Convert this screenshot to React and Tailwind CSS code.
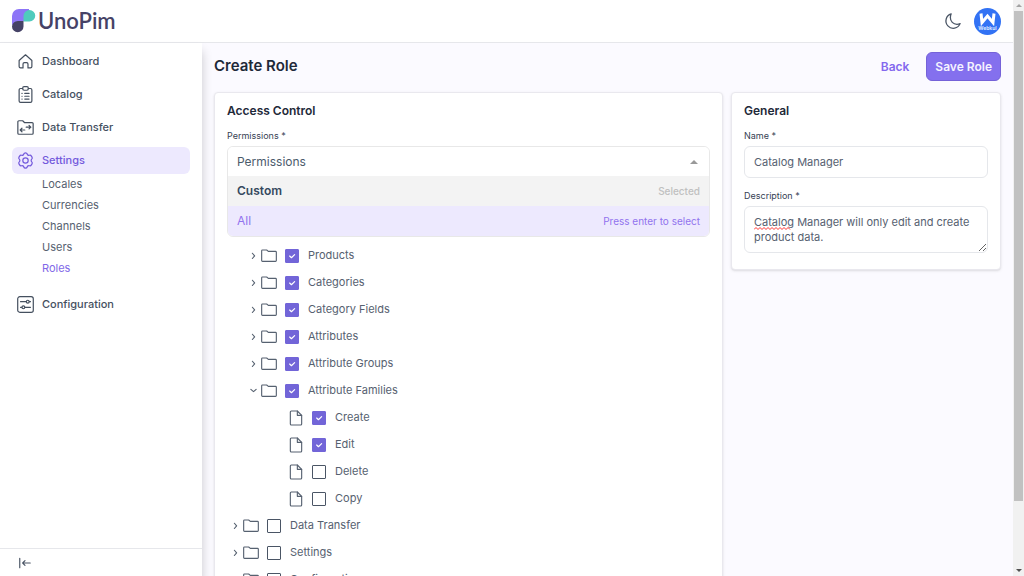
import React, { useState } from "react";

const navItems = [
  { label: "Dashboard", icon: HomeIcon },
  { label: "Catalog", icon: ClipboardIcon },
  { label: "Data Transfer", icon: TransferIcon },
  {
    label: "Settings",
    icon: GearIcon,
    active: true,
    children: ["Locales", "Currencies", "Channels", "Users", "Roles"],
  },
  { label: "Configuration", icon: SlidersIcon },
];

const catalogTree = [
  { key: "products", label: "Products" },
  { key: "categories", label: "Categories" },
  { key: "category_fields", label: "Category Fields" },
  { key: "attributes", label: "Attributes" },
  { key: "attribute_groups", label: "Attribute Groups" },
  {
    key: "families",
    label: "Attribute Families",
    children: [
      { key: "families.create", label: "Create" },
      { key: "families.edit", label: "Edit" },
      { key: "families.delete", label: "Delete" },
      { key: "families.copy", label: "Copy" },
    ],
  },
];

const rootTree = [
  { key: "data_transfer", label: "Data Transfer" },
  { key: "settings", label: "Settings" },
  { key: "configuration", label: "Configuration" },
];

function Svg({ className, children, strokeWidth = 1.7 }) {
  return (
    <svg
      viewBox="0 0 24 24"
      fill="none"
      stroke="currentColor"
      strokeWidth={strokeWidth}
      strokeLinecap="round"
      strokeLinejoin="round"
      className={className}
      aria-hidden="true"
    >
      {children}
    </svg>
  );
}

function HomeIcon(props) {
  return (
    <Svg {...props}>
      <path d="M3 10.500 12 2.500l9 8V19a2 2 0 0 1-2 2H15.500v-5.500a2 2 0 0 0-2-2h-3a2 2 0 0 0-2 2V21H5a2 2 0 0 1-2-2Z" />
    </Svg>
  );
}

function ClipboardIcon(props) {
  return (
    <Svg {...props}>
      <path d="M8 3.500H5a2 2 0 0 0-2 2V21a2 2 0 0 0 2 2h14a2 2 0 0 0 2-2V5.500a2 2 0 0 0-2-2H16" />
      <rect x="8" y="1" width="8" height="5" rx="2" />
      <path d="M7 10.500h.2M11 10.500h6M7 14.500h.2M11 14.500h6M7 18.500h.2M11 18.500h6" />
    </Svg>
  );
}

function TransferIcon(props) {
  return (
    <Svg {...props}>
      <path d="M1.200 4A1.500 1.500 0 0 1 2.700 2.500H8L10.500 5H21.300a1.500 1.500 0 0 1 1.500 1.500V20a1.500 1.500 0 0 1-1.500 1.500H2.700A1.500 1.500 0 0 1 1.200 20Z" />
      <path d="M13 11.500h6.500M17 9l2.500 2.500L17 14M11 15.500H4.500M7 13l-2.500 2.500L7 18" />
    </Svg>
  );
}

function GearIcon(props) {
  return (
    <Svg {...props}>
      <path d="M9.600 2.800c.3-1.100 1-1.600 2.400-1.600s2.100.5 2.400 1.600c.4 1.500 1.800 2.200 3.200 1.800 1.200-.4 2 0 2.700 1.200l.9 1.500c.7 1.200.5 2-.4 2.800-1.100 1-1.100 2.800 0 3.800.9.800 1.100 1.600.4 2.800l-.9 1.500c-.7 1.200-1.500 1.600-2.700 1.200-1.400-.4-2.800.3-3.200 1.800-.3 1.100-1 1.600-2.400 1.600s-2.100-.5-2.400-1.600c-.4-1.500-1.800-2.200-3.200-1.800-1.200.4-2 0-2.700-1.200l-.9-1.500c-.7-1.200-.5-2 .4-2.800 1.100-1 1.100-2.800 0-3.800-.9-.8-1.100-1.600-.4-2.800l.9-1.500c.7-1.200 1.500-1.600 2.700-1.200 1.400.4 2.800-.3 3.200-1.800Z" />
      <circle cx="12" cy="12" r="3.800" />
    </Svg>
  );
}

function SlidersIcon(props) {
  return (
    <Svg {...props}>
      <rect x="1" y="1" width="22" height="22" rx="3" />
      <path d="M5 8h8M17.500 8H19M5 16h1.500M11.500 16H19" />
      <circle cx="15.200" cy="8" r="2" />
      <circle cx="9" cy="16" r="2" />
    </Svg>
  );
}

function FolderIcon() {
  return (
    <Svg className="size-4 shrink-0">
      <path d="M1 4.200A1.200 1.200 0 0 1 2.200 3H8.500L11 5H21.800A1.200 1.200 0 0 1 23 6.200v12.600a1.200 1.200 0 0 1-1.200 1.200H2.200A1.200 1.200 0 0 1 1 18.800Z" />
    </Svg>
  );
}

function FileIcon() {
  return (
    <Svg className="size-4 shrink-0">
      <path d="M14 1.500H5A1.500 1.500 0 0 0 3.500 3v18A1.500 1.500 0 0 0 5 22.500h14a1.500 1.500 0 0 0 1.500-1.500V8Z" />
      <path d="M14 1.500V8h6.500" />
    </Svg>
  );
}

function Logo() {
  return (
    <a href="#" className="flex items-center gap-[2px]">
      <svg viewBox="0 0 24 24" className="size-6" aria-hidden="true">
        <path d="M7 0h10v12H6l-6 4V7a7 7 0 0 1 7-7Z" fill="#8d75f7" />
        <path d="M17.500 1a5.700 5.700 0 0 1 0 11.500H11.500V7a6 6 0 0 1 6-6Z" fill="#4fcbbd" />
        <path d="M6 12h5.500v5.500a5.750 5.750 0 0 1-11.500 0A5.700 5.700 0 0 1 6 12Z" fill="#454266" />
      </svg>
      <span className="font-[Lato] text-[22px] leading-6 font-semibold text-[#454266]">UnoPim</span>
    </a>
  );
}

function Header() {
  return (
    <header className="flex h-[43px] items-center justify-between border-b border-[#e6e7eb] bg-white px-3">
      <Logo />
      <div className="flex items-center gap-3">
        <button type="button" aria-label="Toggle dark mode" className="cursor-pointer text-[#4a5565]">
          <Svg className="size-[18px]">
            <path d="M9.500 2.500a9.800 9.800 0 1 0 12 13c-1.400.6-2.700.9-4.200.9A8.700 8.700 0 0 1 8.500 7.500c0-1.800.3-3.500 1-5Z" />
          </Svg>
        </button>
        <button type="button" aria-label="Account" className="cursor-pointer">
          <svg viewBox="0 0 27 27" className="block size-[27px]">
            <circle cx="13.500" cy="13.500" r="13.500" fill="#3272f4" />
            <path d="M7 5.500l1 9 5.500-6.500 5.500 6.500 1-9" fill="none" stroke="#fff" strokeWidth="3" />
            <text x="13.500" y="22" textAnchor="middle" fontSize="5" fontWeight="700" fontFamily="Inter" fill="#dce8ff">
              Webkul
            </text>
          </svg>
        </button>
      </div>
    </header>
  );
}

function Sidebar() {
  return (
    <aside className="z-10 flex w-[202px] shrink-0 flex-col bg-white shadow-[0_8px_10px_rgba(0,0,0,0.2)]">
      <nav className="flex flex-1 flex-col gap-[6px] px-3 py-[5px]">
        {navItems.map(({ label, icon: Icon, active, children }) => (
          <div key={label}>
            <a
              href="#"
              className={
                active
                  ? "flex h-[27px] items-center gap-2 rounded-md bg-[#ede9fe] px-[5px] font-medium text-[#7359dc]"
                  : "flex h-[27px] items-center gap-2 rounded-md px-[5px] font-medium text-[#45505f]"
              }
            >
              <Icon className="size-[17px] shrink-0" />
              {label}
            </a>
            {children && (
              <ul className="pb-[6px] pl-[30px] leading-[21px] text-[#566170]">
                {children.map((c) => (
                  <li key={c}>
                    <a href="#" className={c === "Roles" ? "text-[#8168e8]" : ""}>{c}</a>
                  </li>
                ))}
              </ul>
            )}
          </div>
        ))}
      </nav>
      <div className="flex h-7 items-center border-t border-[#e6e7eb] px-[18px] text-[#4a5565]">
        <button type="button" aria-label="Collapse menu" className="cursor-pointer">
          <Svg className="block size-[14px]" strokeWidth={2}>
            <path d="M3 4v16M21 12H8M12 8l-4 4 4 4" />
          </Svg>
        </button>
      </div>
    </aside>
  );
}

function TreeRow({ node, checked, onToggle, open, leaf }) {
  return (
    <div className="flex h-[27px] items-center">
      {leaf ? (
        <span className="w-4" />
      ) : (
        <button type="button" aria-label={`Expand ${node.label}`} className="flex w-4 cursor-pointer justify-center">
          <Svg className="size-[9px]" strokeWidth={3}>
            <path d={open ? "M5 9l7 6 7-6" : "M9 6l6 7-6 7"} />
          </Svg>
        </button>
      )}
      {leaf ? <FileIcon /> : <FolderIcon />}
      <label className="ml-2 flex cursor-pointer items-center gap-[9px]">
        <span className="relative flex size-[14px]">
          <input
            type="checkbox"
            checked={checked}
            onChange={() => onToggle(node.key)}
            className="size-[14px] cursor-pointer appearance-none rounded-[1px] border border-[#4a5565] checked:border-[#7265d8] checked:bg-[#7265d8]"
          />
          {checked && (
            <Svg className="pointer-events-none absolute inset-0 size-[14px] text-white" strokeWidth={2}>
              <path d="M8 12l3 3 5.500-5.500" />
            </Svg>
          )}
        </span>
        {node.label}
      </label>
    </div>
  );
}

function AccessControl() {
  const [checked, setChecked] = useState([
    "products",
    "categories",
    "category_fields",
    "attributes",
    "attribute_groups",
    "families",
    "families.create",
    "families.edit",
  ]);

  const toggle = (key) => {
    setChecked(checked.includes(key) ? checked.filter((k) => k !== key) : [...checked, key]);
  };

  const row = (node, extra) => (
    <TreeRow node={node} checked={checked.includes(node.key)} onToggle={toggle} {...extra} />
  );

  return (
    <section className="min-w-0 flex-1 rounded-sm border border-[#e9e8ee] bg-white px-3 pt-2 shadow-sm">
      <h2 className="text-[12px] leading-5 font-semibold text-[#1e2939]">Access Control</h2>
      <label htmlFor="permissions" className="mt-[7px] block text-[9px] leading-4 text-[#364153]">
        Permissions *
      </label>

      <div className="mt-[2px] overflow-hidden rounded-md border border-[#e8e8e8] text-[12px]">
        <div className="relative">
          <select
            id="permissions"
            className="block h-[29px] w-full appearance-none bg-white px-[9px] text-[#4b5b6c]"
            defaultValue=""
          >
            <option value="">Permissions</option>
            <option value="custom">Custom</option>
            <option value="all">All</option>
          </select>
          <svg viewBox="0 0 8 4" className="pointer-events-none absolute top-[13px] right-[11px] h-1 w-2" aria-hidden="true">
            <path d="M4 0l4 4H0Z" fill="#999" />
          </svg>
        </div>
        <ul role="listbox" aria-label="Permissions">
          <li role="option" aria-selected="true" className="flex h-[30px] items-center justify-between bg-[#f3f3f3] px-[9px] font-semibold text-[#35495e]">
            Custom
            <span className="text-[10px] font-medium text-[#c0c0c0]">Selected</span>
          </li>
          <li role="option" aria-selected="false" className="flex h-[30px] items-center justify-between bg-[#ede9fe] px-[9px] text-[#9173ee]">
            All
            <span className="text-[10px]">Press enter to select</span>
          </li>
        </ul>
      </div>

      <div className="mt-[5px] text-[#566170]">
        <ul className="ml-[18px]">
          {catalogTree.map((node) => (
            <li key={node.key}>
              {row(node, { open: !!node.children })}
              {node.children && (
                <ul className="ml-[27px]">
                  {node.children.map((child) => (
                    <li key={child.key}>{row(child, { leaf: true })}</li>
                  ))}
                </ul>
              )}
            </li>
          ))}
        </ul>
        <ul>
          {rootTree.map((node) => (
            <li key={node.key}>{row(node)}</li>
          ))}
        </ul>
      </div>
    </section>
  );
}

function General() {
  const [form, setForm] = useState({
    name: "Catalog Manager",
    description: "Catalog Manager will only edit and create product data.",
  });

  return (
    <section className="w-[270px] shrink-0 rounded-sm border border-[#e9e8ee] bg-white px-3 pt-2 pb-4 shadow-sm">
      <h2 className="text-[12px] leading-5 font-semibold text-[#1e2939]">General</h2>
      <label htmlFor="name" className="mt-[7px] block text-[9px] leading-4 text-[#364153]">Name *</label>
      <input
        id="name"
        value={form.name}
        onChange={(e) => setForm({ ...form, name: e.target.value })}
        className="mt-[2px] block h-8 w-full rounded-md border border-[#e5e7eb] px-[9px] text-[#566170]"
      />
      <label htmlFor="description" className="mt-[10px] block text-[9px] leading-4 text-[#364153]">
        Description *
      </label>
      <div className="relative mt-[2px]">
        <textarea
          id="description"
          rows={2}
          spellCheck={false}
          value={form.description}
          onChange={(e) => setForm({ ...form, description: e.target.value })}
          className="block w-full resize overflow-hidden rounded-md border border-[#e5e7eb] px-[9px] pt-2 pb-[7px] leading-[15px] text-[#566170]"
        />
        {/* spelling mark under the first word */}
        <svg viewBox="0 0 38 3" className="pointer-events-none absolute top-[21px] left-[10px] h-[3px] w-[38px]" aria-hidden="true">
          <path
            d="M0 2.500l2-2 2 2 2-2 2 2 2-2 2 2 2-2 2 2 2-2 2 2 2-2 2 2 2-2 2 2 2-2 2 2 2-2 2 2"
            fill="none"
            stroke="#f33"
            strokeWidth="1"
          />
        </svg>
      </div>
    </section>
  );
}

function Scrollbar() {
  return (
    <div className="flex w-[11px] shrink-0 flex-col items-center justify-between bg-[#f1f1f1] py-1" aria-hidden="true">
      <svg viewBox="0 0 6 3" className="h-[3px] w-[6px]">
        <path d="M3 0l3 3H0Z" fill="#a3a3a3" />
      </svg>
      <div className="mt-1 mb-[68px] w-[9px] flex-1 bg-[#c1c1c1]" />
      <svg viewBox="0 0 6 3" className="h-[3px] w-[6px]">
        <path d="M0 0h6L3 3Z" fill="#505050" />
      </svg>
    </div>
  );
}

export default function App() {
  return (
    <div className="flex h-screen overflow-hidden bg-[#fbfaff] font-[Inter,sans-serif] text-[11px]">
      <div className="flex min-w-0 flex-1 flex-col">
        <Header />
        <div className="flex min-h-0 flex-1">
          <Sidebar />
          <main className="min-w-0 flex-1 overflow-hidden px-3 pt-[9px]">
            <div className="flex items-center justify-between">
              <h1 className="text-[15px] font-semibold text-[#1e2939]">Create Role</h1>
              <div className="flex items-center gap-2 text-[12px] font-semibold">
                <a href="#" className="px-[9px] text-[#8468ee]">Back</a>
                <button
                  type="button"
                  className="h-[29px] cursor-pointer rounded-md border border-[#7562d8] bg-[#8470ee] px-2 text-[#f5f3ff]"
                >
                  Save Role
                </button>
              </div>
            </div>
            <div className="mt-[11px] flex items-start gap-2">
              <AccessControl />
              <General />
            </div>
          </main>
        </div>
      </div>
      <Scrollbar />
    </div>
  );
}
